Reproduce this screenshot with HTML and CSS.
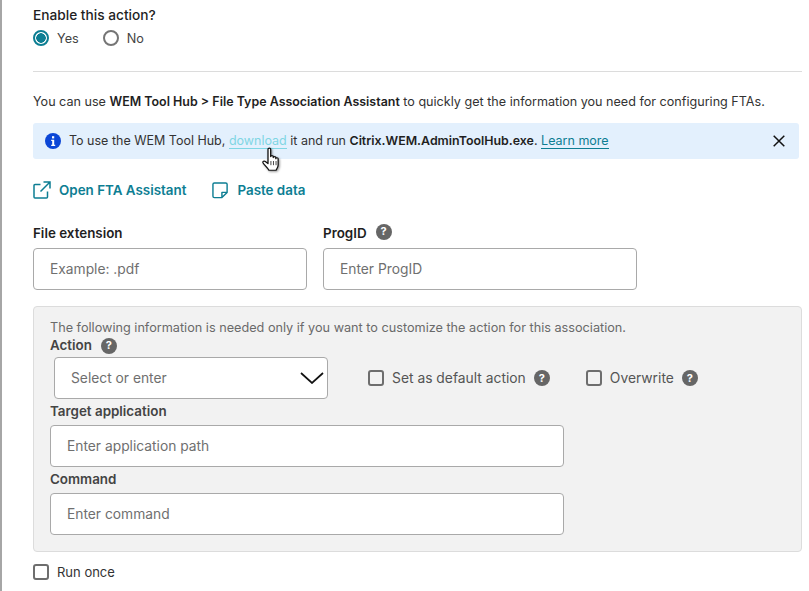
FILE: index.html
```html
<!DOCTYPE html>
<html lang="en">
<head>
<meta charset="utf-8">
<title>FTA action</title>
<link rel="stylesheet" href="styles.css">
</head>
<body>
<main class="page">
  <div class="enable-title">Enable this action?</div>
  <div class="radios">
    <label class="choice"><span class="radio on"></span>Yes</label>
    <label class="choice"><span class="radio"></span>No</label>
  </div>
  <hr class="rule">
  <p class="intro">You can use <b>WEM Tool Hub &gt; File Type Association Assistant</b> to quickly get the information you need for configuring FTAs.</p>
  <div class="banner">
    <svg class="info" viewBox="0 0 16 16" width="16" height="16"><circle cx="8" cy="8" r="8" fill="#0b46d6"/><rect x="7" y="3.2" width="2.2" height="2.2" fill="#fff"/><path d="M6.2 6.8h3v5h1v1.2H6.2v-1.2h1V8H6.2z" fill="#fff"/></svg>
    <span class="banner-text">To use the WEM Tool Hub, <a class="dl">download</a> it and run <b>Citrix.WEM.AdminToolHub.exe</b>. <a class="learn">Learn more</a></span>
    <svg class="close" viewBox="0 0 12 12" width="12" height="12"><path d="M.7.7l10.6 10.6M11.3.7L.7 11.3" stroke="#111" stroke-width="1.5" fill="none"/></svg>
    <svg class="cursor" viewBox="0 0 18 26" width="21" height="27" preserveAspectRatio="none"><path d="M6 2.2c0-1.500 2.300-1.500 2.300 0v7c0-1.200 2.200-1.200 2.200 0v1c0-1.200 2.200-1.200 2.200 0v1c0-1.100 2-1.100 2 .2v6c0 2.400-1.200 3.600-1.800 5H6.800c-.8-2-4.600-5.700-5.100-7.200-.4-1.300 1-2 2-1.200L6 16z" fill="#fff" stroke="#111" stroke-width="1.100" stroke-linejoin="round"/><path d="M8.500 13.500v4M10.700 13.500v4M12.900 13.500v4" stroke="#111" stroke-width=".7"/></svg>
  </div>
  <div class="actions">
    <a class="action"><svg viewBox="0 0 18 18" width="18" height="18"><path d="M14.500 10.500v5.500a1 1 0 0 1-1 1H2a1 1 0 0 1-1-1V4.500a1 1 0 0 1 1-1h5.500M10.500 1h6.500v6.500M17 1L7.500 10.500" stroke="#0d7e93" stroke-width="1.500" fill="none"/></svg>Open FTA Assistant</a>
    <a class="action"><svg viewBox="0 0 18 18" width="17" height="17"><path d="M10.500 16.500H2.500a1.500 1.500 0 0 1-1.500-1.500V2.500A1.500 1.500 0 0 1 2.500 1h12A1.500 1.500 0 0 1 16 2.500V11zM10.500 16.500V11H16" stroke="#0d7e93" stroke-width="1.500" fill="none" stroke-linejoin="round"/></svg>Paste data</a>
  </div>
  <div class="fields">
    <div class="field ext">
      <div class="label">File extension</div>
      <div class="input">Example: .pdf</div>
    </div>
    <div class="field prog">
      <div class="label">ProgID <span class="help dark raised">?</span></div>
      <div class="input">Enter ProgID</div>
    </div>
  </div>
  <section class="panel">
    <div class="note">The following information is needed only if you want to customize the action for this association.</div>
    <div class="label sub">Action <span class="help">?</span></div>
    <div class="action-row">
      <div class="input select">Select or enter
        <svg viewBox="0 0 24 12" width="24" height="12"><path d="M1 1l11 10L23 1" stroke="#111" stroke-width="1.700" fill="none"/></svg>
      </div>
      <label class="check-item first"><span class="box"></span>Set as default action <span class="help">?</span></label>
      <label class="check-item"><span class="box"></span>Overwrite <span class="help">?</span></label>
    </div>
    <div class="label sub target">Target application</div>
    <div class="input wide">Enter application path</div>
    <div class="label sub command">Command</div>
    <div class="input wide">Enter command</div>
  </section>
  <label class="run"><span class="box"></span>Run once</label>
</main>
</body>
</html>
```
FILE: styles.css
```css
* { box-sizing: border-box; }
html, body { margin: 0; height: 100%; background: #fff; overflow: hidden; }
body { font-family: Inter, "Liberation Sans", sans-serif; font-size: 13.5px; color: #1f1f1f; }
.page { height: 591px; border-left: 2px solid #a6a6a6; padding: 7px 0 0 31px; width: 802px; }
.enable-title { font-size: 13.7px; font-weight: 500; line-height: 17px; }
.radios { display: flex; gap: 24px; margin-top: 4px; height: 20px; align-items: center; }
.choice { display: flex; align-items: center; gap: 8px; font-size: 12.7px; color: #444; }
.radio { width: 16px; height: 16px; border-radius: 50%; border: 2px solid #757575; background: #fff; }
.radio.on { border-color: #0d7e93; background: radial-gradient(circle, #0d7e93 0 4.500px, #fff 5px); }
.rule { margin: 23px 0 0; border: 0; border-top: 1px solid #dcdcdc; }
.intro { margin: 21px 0 0; line-height: 17px; height: 17px; white-space: nowrap; font-size: 12.6px; color: #333; }
.intro b { font-weight: 600; color: #1f1f1f; font-size: 12.45px; }
.banner { position: relative; margin-top: 13px; height: 36px; width: 766px; background: #e3f0fd; border-radius: 3px; display: flex; align-items: center; padding: 0 14px 0 12px; font-size: 12.5px; color: #333; }
.banner-text { margin-left: 8px; flex: 1; white-space: nowrap; line-height: 17px; padding-bottom: 2px; }
.banner b { font-weight: 600; color: #1f1f1f; font-size: 12.4px; }
.dl { color: #7fd6e4; border-bottom: 1px solid #7fd6e4; }
.learn { color: #0d7e93; border-bottom: 1px solid #0d7e93; }
.cursor { position: absolute; left: 228px; top: 24px; filter: drop-shadow(1px 1px 1px rgba(0,0,0,.4)); }
.actions { display: flex; gap: 26px; margin-top: 21px; height: 20px; align-items: center; }
.action { display: flex; align-items: center; gap: 8px; color: #0d7e93; font-weight: 600; font-size: 13.4px; }
.fields { display: flex; gap: 16px; margin-top: 25px; }
.field.ext { width: 274px; }
.field.prog { width: 314px; }
.label { font-size: 13.4px; font-weight: 600; line-height: 17px; color: #1f1f1f; display: flex; align-items: center; gap: 9px; height: 17px; }
.input { margin-top: 6px; height: 42px; border: 1px solid #a9a9a9; border-radius: 4px; background: #fff; display: flex; align-items: center; padding: 0 16px; font-size: 13.8px; color: #6f6f6f; }
.help { width: 16px; height: 16px; border-radius: 50%; background: #666; color: #fff; font-size: 11px; font-weight: 700; display: inline-flex; align-items: center; justify-content: center; line-height: 1; }
.help.raised { position: relative; top: -2px; }
.panel { margin-top: 16px; width: 769px; height: 246px; background: #f2f2f2; border: 1px solid #dcdcdc; border-radius: 4px; padding: 12px 0 0 16px; }
.note { font-size: 12.68px; line-height: 17px; color: #6a6a6a; white-space: nowrap; }
.label.sub { color: #444; height: 17px; margin-top: 1px; }
.action-row { display: flex; align-items: center; margin-top: 3px; }
.input.select { margin: 0 0 0 4px; width: 274px; justify-content: space-between; padding-right: 3px; }
.check-item { display: flex; align-items: center; gap: 8px; font-size: 13.85px; color: #555; }
.check-item.first { margin-left: 40px; margin-right: 36px; }
.box { width: 16px; height: 16px; border: 2px solid #6e6e6e; border-radius: 3px; background: #fff; flex: none; }
.panel .box { background: #f2f2f2; }
.label.target { margin-top: 4px; }
.input.wide { width: 514px; margin-top: 5px; }
.label.command { margin-top: 4px; }
.run { display: flex; align-items: center; gap: 8px; margin-top: 12px; font-size: 13px; color: #333; }
```
